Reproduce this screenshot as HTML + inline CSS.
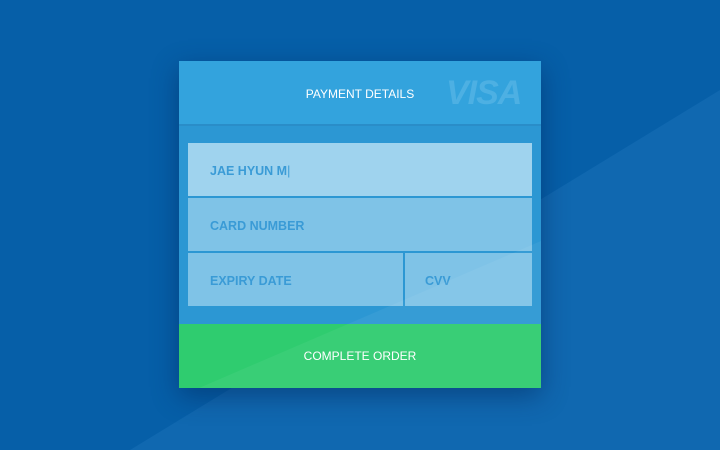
<!DOCTYPE html>
<html><head><style>
html,body{margin:0;padding:0;width:720px;height:450px;overflow:hidden;background:#065fa8;font-family:"Liberation Sans",sans-serif}
.card{position:absolute;left:179px;top:61px;width:362px;height:327px;box-shadow:0 8px 25px rgba(0,30,80,.45)}
.hd{position:absolute;left:0;top:0;width:362px;height:63px;background:#33a3dd;border-bottom:2px solid #2a8dc8}
.hd .t{position:absolute;left:0;width:362px;top:26px;text-align:center;color:#fff;font-size:12px;letter-spacing:0}
.visa{position:absolute;left:267px;top:13px;font-size:34px;font-weight:bold;font-style:italic;color:#4db0e3;letter-spacing:-1px}
.bd{position:absolute;left:0;top:65px;width:362px;height:198px;background:#2c97d3}
.in{position:absolute;background:#7fc3e7;color:#3a9bd6;font-size:12.5px;font-weight:bold;box-sizing:border-box;padding-left:22px;padding-top:2px;line-height:53px;height:53px}
.btn{position:absolute;left:0;top:263px;width:362px;height:64px;background:#2fcc6f;color:#fff;font-size:12px;text-align:center;line-height:64px}
.ov{position:absolute;left:0;top:0;width:720px;height:450px}
</style></head><body>
<svg class="ov" width="720" height="450"><polygon points="130,450 720,90 720,450" fill="#1068b0"/></svg>
<div class="card">
<div class="hd"><div class="t">PAYMENT DETAILS</div><div class="visa">VISA</div></div>
<div class="bd"></div>
<div class="in" style="left:9px;top:82px;width:344px;background:#9fd3ee">JAE HYUN M<span style="font-weight:normal;color:#3a9bd6">|</span></div>
<div class="in" style="left:9px;top:137px;width:344px">CARD NUMBER</div>
<div class="in" style="left:9px;top:192px;width:215px">EXPIRY DATE</div>
<div class="in" style="left:226px;top:192px;width:127px;padding-left:20px">CVV</div>
<div class="btn">COMPLETE ORDER</div>
<svg style="position:absolute;left:0;top:0" width="362" height="327"><polygon points="20,327 362,180 362,327" fill="rgba(255,255,255,0.05)"/></svg>
</div>
</body></html>
